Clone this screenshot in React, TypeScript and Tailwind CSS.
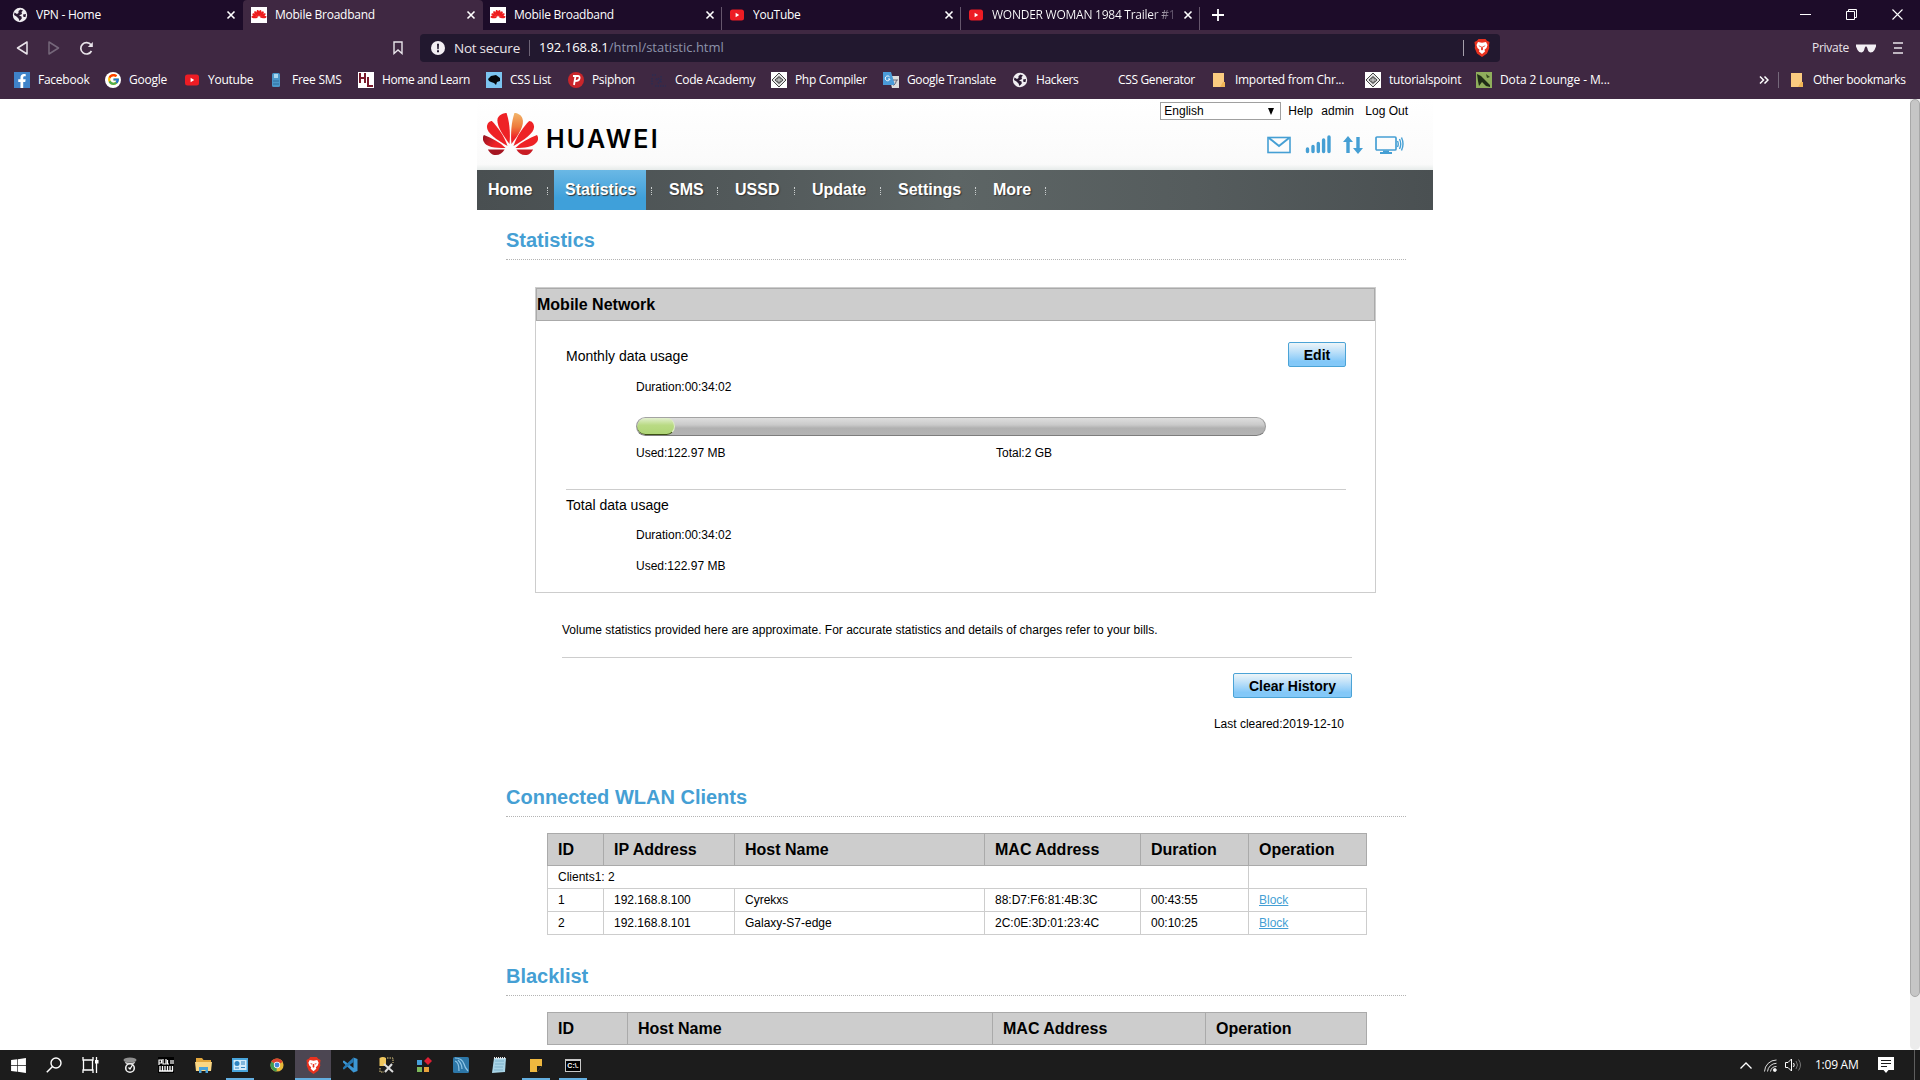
import type { ReactNode } from 'react';
import clsx from 'clsx';
import { FcGoogle } from 'react-icons/fc';
import { FaWindows, FaFacebookF } from 'react-icons/fa';

const PETAL = 'M0 -4 C-6 -13 -7 -25 -2 -30 C2 -31 5 -28 5 -23 C5 -16 2 -9 0 -4Z';

function HuaweiFlower({ className }: { className?: string }) {
    return (
        <svg viewBox="0 0 56 42" preserveAspectRatio="none" className={className}>
            <defs>
                <linearGradient id="petalGold" x1="0" y1="0" x2="0" y2="1">
                    <stop offset="0" stopColor="#f2b56a" />
                    <stop offset="0.45" stopColor="#ee7a3c" />
                    <stop offset="0.8" stopColor="#ee2226" />
                </linearGradient>
                <linearGradient id="petalDark" x1="0" y1="0" x2="1" y2="0.4">
                    <stop offset="0" stopColor="#8d1220" />
                    <stop offset="0.7" stopColor="#ee2226" />
                </linearGradient>
            </defs>
            <path d="M27 31 C20 22 13 12 15 5 C17 1 22 0 24 0 C27 9 28 20 27 31Z" fill="#ee2226" />
            <path d="M29 31 C28 20 29 9 32 0 C35 0 39 2 40 5 C43 12 36 22 29 31Z" fill="url(#petalGold)" />
            <path d="M25 33 C14 27 4 20 4 14 C4 10 7 8 9 8 C15 14 21 22 25 33Z" fill="#ee2226" />
            <path d="M31 33 C35 22 41 14 47 8 C50 8 52 11 52 14 C52 20 42 27 31 33Z" fill="#ee2226" />
            <path d="M23 35 C12 35 3 34 1 29 C-1 26 0 23 1 22 C9 25 17 29 23 35Z" fill="url(#petalDark)" />
            <path d="M33 35 C39 29 47 25 55 22 C57 25 56 28 54 30 C51 34 42 35 33 35Z" fill="#ee2226" />
            <path d="M5 36.500 L22 36.500 C20 40 17 42 13 42 C9 42 7 40 5 36.500Z" fill="#a51622" />
            <path d="M34 36.500 L51 36.500 C49 40 47 42 43 42 C39 42 36 40 34 36.500Z" fill="#c91c24" />
        </svg>
    );
}

function FlowerFavicon() {
    return (
        <span className="flex size-4 items-center justify-center bg-white">
            <svg viewBox="-32 -32 64 44" className="h-3 w-4">
                {[-84, -60, -36, -12, 12, 36, 60, 84].map(a => (
                    <path key={a} d={PETAL} fill="#ee1c1c" transform={`rotate(${a})`} />
                ))}
            </svg>
        </span>
    );
}

function Globe() {
    return (
        <svg viewBox="0 0 16 16" className="size-4">
            <circle cx="8" cy="8" r="7.200" fill="#f1eef2" />
            <path d="M8.500 2.500 L11 3.500 L9.500 5 L10 7 L7 8.500 L9.500 9.500 L9.800 11.500 L7.500 14 L6.500 11.500 L4.500 9.500 L2 8 L2.500 5.500 L5 7 L6.500 6 L6.500 4Z M11 7.500 L14 7 L13.500 10 L11.500 10Z" fill="#2b1a33" />
        </svg>
    );
}

function YoutubeIcon() {
    return (
        <svg viewBox="0 0 16 16" className="size-4">
            <rect x="1" y="2.500" width="14" height="11" rx="2.500" fill="#ed1c24" />
            <path d="M6.600 5.800 L10.200 8 L6.600 10.200Z" fill="#fff" />
        </svg>
    );
}

function Folder() {
    return (
        <svg viewBox="0 0 16 16" className="size-4">
            <path d="M2 1 H13 V11 H14 V15 H2Z" fill="#fbcb80" />
            <path d="M12 10 H14 V15 H9Z" fill="#f0b455" />
        </svg>
    );
}

function BraveLion({ className }: { className?: string }) {
    return (
        <svg viewBox="0 0 16 18" className={className}>
            <path d="M4.500 0 H11.500 L13 1.800 L15.500 3 L15 7 L15.300 9 L13 14.500 L8 18 L3 14.500 L0.700 9 L1 7 L0.500 3 L3 1.800Z" fill="#e8321f" />
            <path d="M4 3 L8 3.800 L12 3 L13.500 6 L12.500 9 L10.500 10.800 L11 12.500 L8 15 L5 12.500 L5.500 10.800 L3.500 9 L2.500 6Z" fill="#fff" />
            <path d="M4.300 6.300 L7 7.200 L6.300 8.200Z M11.700 6.300 L9 7.200 L9.700 8.200Z M7.300 7.500 H8.700 L9 10.500 L8 11.500 L7 10.500Z" fill="#e8321f" />
        </svg>
    );
}

function CompilerIcon() {
    return (
        <svg viewBox="0 0 16 16" className="size-4">
            <rect width="16" height="16" fill="#fff" />
            <path d="M8 1 L15 8 L8 15 L1 8Z" fill="#e4e4e4" stroke="#444" />
            <path d="M4 8 L8 4.500 L12 8 L8 11.500Z" fill="#777" stroke="#333" strokeWidth="0.800" />
            <path d="M5 8 H11 M8 6 V10" stroke="#ddd" strokeWidth="0.800" />
        </svg>
    );
}

interface Tab {
    title: string;
    icon: ReactNode;
    active?: boolean;
    divider?: boolean;
    faded?: boolean;
    className: string;
}

const tabs: Tab[] = [
    { title: 'VPN - Home', icon: <Globe />, className: 'w-[243px] pl-3' },
    { title: 'Mobile Broadband', icon: <FlowerFavicon />, active: true, className: 'w-[240px] pl-2' },
    { title: 'Mobile Broadband', icon: <FlowerFavicon />, divider: true, className: 'w-[239px] pl-[7px]' },
    { title: 'YouTube', icon: <YoutubeIcon />, divider: true, className: 'w-[239px] pl-[7px]' },
    { title: 'WONDER WOMAN 1984 Trailer #1', icon: <YoutubeIcon />, divider: true, faded: true, className: 'w-[239px] pl-[7px]' },
];

function TabStrip() {
    return (
        <div className="flex h-[30px] bg-[#1d0c29]">
            {tabs.map((tab, i) => (
                <div
                    key={i}
                    className={clsx(
                        'relative flex items-center pr-[7px]',
                        tab.className,
                        tab.active && 'rounded-t-[4px] bg-[#3f2842]'
                    )}
                >
                    {tab.icon}
                    <span
                        className={clsx(
                            'ml-2 flex-1 overflow-hidden whitespace-nowrap',
                            tab.faded && 'bg-linear-to-r from-white from-85% to-[#3a2a45] to-100% bg-clip-text text-transparent'
                        )}
                    >
                        {tab.title}
                    </span>
                    <svg viewBox="0 0 10 10" className="ml-1 size-[10px]">
                        <path d="M1.500 1.500 L8.500 8.500 M8.500 1.500 L1.500 8.500" stroke="#fff" strokeWidth="1.600" />
                    </svg>
                    {tab.divider && <span className="absolute right-0 bottom-0 h-[23px] w-px bg-[#65566c]" />}
                </div>
            ))}
            <svg viewBox="0 0 12 12" className="mt-[9px] ml-3 size-3">
                <path d="M6 0 V12 M0 6 H12" stroke="#fff" strokeWidth="1.800" />
            </svg>
            <div className="ml-auto flex gap-[35px] pt-[9px] pr-[17px]">
                <svg viewBox="0 0 11 11" className="size-[11px]"><path d="M0 5.500 H11" stroke="#fff" /></svg>
                <svg viewBox="0 0 11 11" className="size-[11px]">
                    <path d="M0.500 2.500 H8.500 V10.500 H0.500Z M2.500 2.500 V0.500 H10.500 V8.500 H8.500" fill="none" stroke="#fff" />
                </svg>
                <svg viewBox="0 0 11 11" className="size-[11px]"><path d="M0.500 0.500 L10.500 10.500 M10.500 0.500 L0.500 10.500" stroke="#fff" strokeWidth="1.100" /></svg>
            </div>
        </div>
    );
}

function AddressBar() {
    return (
        <div className="flex h-9 items-center pl-[16px] text-[#e9e4ea]">
            <svg viewBox="0 0 12 14" className="h-[14px] w-3"><path d="M11 1 V13 L1.500 7Z" fill="none" stroke="#e9e4ea" strokeWidth="1.500" strokeLinejoin="round" /></svg>
            <svg viewBox="0 0 12 14" className="ml-5 h-[14px] w-3"><path d="M1 1 V13 L10.500 7Z" fill="none" stroke="#75677a" strokeWidth="1.500" strokeLinejoin="round" /></svg>
            <svg viewBox="0 0 15 15" className="ml-[19px] size-[15px]">
                <path d="M12.500 10 A5.700 5.700 0 1 1 12 3.800" fill="none" stroke="#e9e4ea" strokeWidth="1.700" />
                <path d="M13.800 1 V6 H8.800Z" fill="#e9e4ea" />
            </svg>
            <svg viewBox="0 0 10 14" className="ml-[299px] h-[14px] w-[10px]"><path d="M1 1 H9 V12.500 L5 9 L1 12.500Z" fill="none" stroke="#e9e4ea" strokeWidth="1.400" /></svg>
            <div className="ml-[17px] flex h-[28px] w-[1080px] items-center rounded-[4px] bg-[#22182f] pl-[11px] text-[13.500px]">
                <svg viewBox="0 0 14 14" className="size-[14px]">
                    <circle cx="7" cy="7" r="7" fill="#f3eff4" />
                    <path d="M6 2.800 H8 L7.700 8.200 H6.300Z M6 9.300 H8 V11.200 H6Z" fill="#22182f" />
                </svg>
                <span className="ml-[9px] w-[75px] whitespace-nowrap">Not secure</span>
                <span className="h-4 w-px bg-[#6d6476]" />
                <span className="ml-[9px] text-[13px] tracking-normal whitespace-nowrap text-[#8d93ab]">
                    <span className="text-white">192.168.8.1</span>/html/statistic.html
                </span>
                <span className="ml-auto h-4 w-px bg-[#a59fab]" />
                <BraveLion className="mr-[10px] ml-[10px] h-[18px] w-4" />
            </div>
            <span className="ml-auto">Private</span>
            <svg viewBox="0 0 20 9" className="ml-[7px] h-[9px] w-[20px]">
                <path d="M0 0.500 H20 V2.500 L18.500 6 Q17 8.500 14.500 8.500 Q12 8 11.300 4 L10.500 2.500 H9.500 L8.700 4 Q8 8 5.500 8.500 Q3 8.500 1.500 6 L0 2.500Z" fill="#f3eff4" />
            </svg>
            <svg viewBox="0 0 10 12" className="mr-[17px] ml-[17px] h-3 w-[10px]"><path d="M0 1 H10 M1 6 H9 M0 11 H10" stroke="#e9e4ea" strokeWidth="1.700" /></svg>
        </div>
    );
}

const bookmarks: { label: string; icon: ReactNode; className: string }[] = [
    {
        label: 'Facebook',
        className: 'w-[91px]',
        icon: <span className="flex size-4 items-end justify-center bg-[#3f83c9] text-[14px] text-white"><FaFacebookF /></span>,
    },
    {
        label: 'Google',
        className: 'w-[79px]',
        icon: <span className="flex size-4 items-center justify-center rounded-full bg-white text-[13px]"><FcGoogle /></span>,
    },
    { label: 'Youtube', className: 'w-[84px]', icon: <YoutubeIcon /> },
    {
        label: 'Free SMS',
        className: 'w-[90px]',
        icon: (
            <svg viewBox="0 0 16 16" className="size-4">
                <rect x="4" y="1" width="8" height="14" rx="1.500" fill="#4b97c9" />
                <rect x="6" y="2" width="4" height="4" fill="#a9d6ee" />
                <path d="M5 9 H11 M5 12 H11" stroke="#2f6d9c" />
            </svg>
        ),
    },
    {
        label: 'Home and Learn',
        className: 'w-[128px] tracking-[-0.400px]',
        icon: (
            <svg viewBox="0 0 16 16" className="size-4">
                <rect width="16" height="16" fill="#fff" />
                <path d="M2 1 V11 M7 1 V11 M2 6 H7 M10 5 V14 H15" fill="none" stroke="#7a1a2c" strokeWidth="2" />
            </svg>
        ),
    },
    {
        label: 'CSS List',
        className: 'w-[82px]',
        icon: (
            <svg viewBox="0 0 16 16" className="size-4">
                <rect width="16" height="16" fill="#7cc4f0" />
                <path d="M2 7 L5 4 L10 3 L14 6 L14 9 L11 10 L10 13 L8 11 L5 10 L3 9Z" fill="#05070a" />
            </svg>
        ),
    },
    {
        label: 'Psiphon',
        className: 'w-[83px] tracking-[-0.350px]',
        icon: (
            <svg viewBox="0 0 16 16" className="size-4">
                <circle cx="8" cy="8" r="8" fill="#c9262b" />
                <path d="M6 13 L7.500 4 H10 Q12 4 11.500 6.500 Q11 9 7 9 M5 4 H8" fill="none" stroke="#fff" strokeWidth="1.800" />
            </svg>
        ),
    },
    {
        label: 'Code Academy',
        className: 'w-[120px]',
        icon: (
            <svg viewBox="0 0 16 16" className="size-4">
                <path d="M1 3 H5 M1 6 V13 M4 14 H15 M10 4 V11 M5 8 Q7 5 9 8 Q9 11 6 11" fill="none" stroke="#2d2b51" strokeWidth="1.500" strokeDasharray="1.500 1" />
            </svg>
        ),
    },
    { label: 'Php Compiler', className: 'w-[112px] tracking-[-0.350px]', icon: <CompilerIcon /> },
    {
        label: 'Google Translate',
        className: 'w-[129px] tracking-[-0.350px]',
        icon: (
            <svg viewBox="0 0 16 16" className="size-4">
                <path d="M6 4 H16 V16 H9Z" fill="#dcdcdc" />
                <path d="M0 0 H8 L12 13 H0Z" fill="#4a9bd8" />
                <path d="M6.500 4.800 A2.400 2.400 0 1 0 7 7 H5" fill="none" stroke="#fff" />
                <path d="M10 8 H15 M13.500 8 Q13 12 10.500 13.500" fill="none" stroke="#667" />
            </svg>
        ),
    },
    { label: 'Hackers', className: 'w-[82px] tracking-[-0.350px]', icon: <Globe /> },
    { label: 'CSS Generator', className: 'w-[117px] tracking-[-0.350px]', icon: <span className="size-4" /> },
    { label: 'Imported from Chr...', className: 'w-[154px] tracking-[-0.300px]', icon: <Folder /> },
    { label: 'tutorialspoint', className: 'w-[111px]', icon: <CompilerIcon /> },
    {
        label: 'Dota 2 Lounge - M...',
        className: 'w-[140px] tracking-[-0.100px]',
        icon: (
            <svg viewBox="0 0 16 16" className="size-4">
                <rect width="16" height="16" fill="#8fae5c" />
                <path d="M1 2 L5 4 L14 13 L14 15 L10 14 L6 10 L3 14 L2 9Z" fill="#1f2d16" />
                <path d="M10 2 L14 5 L11 6Z" fill="#36491f" />
            </svg>
        ),
    },
];

function BookmarksBar() {
    return (
        <div className="flex h-8 items-center pb-[5px] pl-[14px] whitespace-nowrap">
            {bookmarks.map(b => (
                <div key={b.label} className={clsx('flex shrink-0 items-center gap-2', b.className)}>
                    {b.icon}
                    {b.label}
                </div>
            ))}
            <svg viewBox="0 0 10 8" className="ml-auto h-2 w-[10px]"><path d="M1 0.500 L4.500 4 L1 7.500 M5.500 0.500 L9 4 L5.500 7.500" fill="none" stroke="#fff" strokeWidth="1.500" /></svg>
            <span className="ml-[9px] h-4 w-px bg-[#75687a]" />
            <div className="ml-[10px] flex w-[131px] items-center gap-2 tracking-[-0.400px]">
                <Folder />
                Other bookmarks
            </div>
        </div>
    );
}

const navItems = [
    { label: 'Home', className: 'w-[77px] pl-[11px]' },
    { label: 'Statistics', className: 'w-[92px] pl-[11px]', active: true },
    { label: 'SMS', className: 'w-[66px] pl-[17px]' },
    { label: 'USSD', className: 'w-[77px] pl-[17px]' },
    { label: 'Update', className: 'w-[86px] pl-[17px]' },
    { label: 'Settings', className: 'w-[95px] pl-[17px]' },
    { label: 'More', className: 'w-[70px] pl-[17px]' },
];

function NavDots({ className }: { className?: string }) {
    return <span className={clsx('mt-px h-2 border-l border-dotted border-[#c9cdcd]', className)} />;
}

function StatusIcons() {
    return (
        <div className="flex h-[19px] items-center text-[#459fd4]">
            <svg viewBox="0 0 24 18" className="h-[18px] w-6" fill="none" stroke="currentColor">
                <rect x="1" y="1.500" width="22" height="15" strokeWidth="1.600" />
                <path d="M2 2 L12 10 L22 2" strokeWidth="2" />
            </svg>
            <svg viewBox="0 0 26 19" className="ml-[14px] h-[19px] w-[26px]" stroke="currentColor" strokeWidth="3.400" strokeLinecap="round">
                <path d="M2.500 14 V16.500 M8 11.500 V16.500 M13.300 8.500 V16.500 M18.600 5 V16.500 M24 2 V16.500" />
            </svg>
            <svg viewBox="0 0 20 18" className="ml-[12px] h-[18px] w-5" fill="currentColor">
                <path d="M5 0 L10 6 H6.700 V17 H3.300 V6 H0Z" />
                <path d="M15 18 L20 12 H16.700 V1 H13.300 V12 H10Z" />
            </svg>
            <svg viewBox="0 0 29 18" className="ml-3 h-[18px] w-[29px]" fill="none" stroke="currentColor">
                <rect x="1" y="1" width="20" height="13" rx="1" strokeWidth="1.700" />
                <path d="M5 17 H17 M8 15.500 H14" strokeWidth="2" />
                <path d="M22.500 5 Q24 8 22.500 11 M24.500 3 Q27 8 24.500 13 M26.500 1.500 Q29.500 8 26.500 14.500" strokeWidth="1.400" />
            </svg>
        </div>
    );
}

function Header() {
    return (
        <header className="flex h-[71px] justify-between bg-[linear-gradient(#fff,#fbfbfb_80%,#fafafa_92%,#e6ebea)]">
            <div className="flex items-start pt-[14px] pl-[6px]">
                <HuaweiFlower className="h-[42px] w-[55px]" />
                <span className="mt-[13px] ml-[8px] font-['Inter'] text-[25px] leading-[26px] font-semibold tracking-[2.200px] text-black">HUAWEI</span>
            </div>
            <div className="flex flex-col items-end pt-[3px] pr-[25px]">
                <div className="flex h-[18px] items-center">
                    <div className="flex h-[18px] w-[121px] items-center justify-between border border-[#a0a0a0] bg-white pr-[6px] pl-[3px]">
                        English
                        <svg viewBox="0 0 6 7" className="h-[7px] w-[6px]"><path d="M0 0 H6 L3 7Z" /></svg>
                    </div>
                    <span className="ml-[7px] w-[33px]">Help</span>
                    <span className="w-[44px]">admin</span>
                    <span className="whitespace-nowrap">Log Out</span>
                </div>
                <div className="mt-[15px] mr-1">
                    <StatusIcons />
                </div>
            </div>
        </header>
    );
}

function NavBar() {
    return (
        <nav className="flex h-10 bg-[linear-gradient(90deg,#494f51,#535a5b_30%,#5d6565_50%,#555c5d_75%,#4a5052)] text-base font-bold text-white">
            {navItems.map(item => (
                <div key={item.label} className="flex items-center">
                    <div
                        className={clsx(
                            'flex h-full items-center justify-between',
                            item.className,
                            item.active && 'bg-linear-to-b from-[#6ab8e5] to-[#3fa0da] to-70%'
                        )}
                    >
                        <span className="[text-shadow:1px_1px_1px_#333]">{item.label}</span>
                        {!item.active && <NavDots className={item.label === 'Home' ? 'mr-[6px]' : undefined} />}
                    </div>
                    {item.active && <NavDots className="ml-[5px]" />}
                </div>
            ))}
        </nav>
    );
}

function SectionTitle({ children, className }: { children: ReactNode; className?: string }) {
    return (
        <h2 className={clsx('ml-[29px] h-[50px] w-[900px] border-b border-dotted border-[#b4b4b4] pt-[15px] text-xl leading-[30px] font-bold text-[#459fd4]', className)}>
            {children}
        </h2>
    );
}

function BlueButton({ children, className }: { children: ReactNode; className?: string }) {
    return (
        <button className={clsx('h-[25px] rounded-[2px] border border-[#4ba3d6] bg-linear-to-b from-[#eef5f8] to-[#83c8f8] to-80% text-sm leading-none font-bold text-black', className)}>
            {children}
        </button>
    );
}

function UsageBar({ used, total }: { used: number; total: number }) {
    return (
        <div className="ml-[70px] h-[19px] w-[630px] overflow-hidden rounded-full border border-t-[#a3a3a3] border-r-[#999] border-b-[#7d7d7d] border-l-[#999] bg-[linear-gradient(#dedede,#cacaca_40%,#b0b0b0_60%,#b4b4b4)]">
            <div
                className="h-full rounded-full border-r border-b border-r-[#dff0c4] border-b-[#3c5014] bg-[linear-gradient(#e2efce,#b9da84_45%,#afd576)]"
                style={{ width: `${(used / total) * 100}%` }}
            />
        </div>
    );
}

function UsagePanel() {
    return (
        <section className="mt-[27px] ml-[58px] h-[306px] w-[841px] border border-[#cdcdcd] bg-white">
            <h3 className="flex h-[33px] items-center border border-[#aaa] bg-[#cdcdcd] text-base font-bold">Mobile Network</h3>
            <div className="pt-[21px] pr-[29px] pl-[30px] leading-5">
                <div className="flex h-[25px] items-start justify-between">
                    <span className="mt-1 text-sm leading-5">Monthly data usage</span>
                    <BlueButton className="w-[58px]">Edit</BlueButton>
                </div>
                <p className="mt-[10px] mb-5 ml-[70px]">Duration:00:34:02</p>
                <UsageBar used={122.97} total={2048} />
                <div className="mt-[7px] ml-[70px] flex">
                    <span className="w-[360px]">Used:122.97 MB</span>
                    <span>Total:2 GB</span>
                </div>
                <div className="mt-[26px] border-t border-[#cdcdcd] pt-[5px]">
                    <p className="text-sm leading-5">Total data usage</p>
                    <p className="mt-[10px] ml-[70px]">Duration:00:34:02</p>
                    <p className="mt-[11px] ml-[70px]">Used:122.97 MB</p>
                </div>
            </div>
        </section>
    );
}

const clients = [
    { id: 1, ip: '192.168.8.100', host: 'Cyrekxs', mac: '88:D7:F6:81:4B:3C', duration: '00:43:55' },
    { id: 2, ip: '192.168.8.101', host: 'Galaxy-S7-edge', mac: '2C:0E:3D:01:23:4C', duration: '00:10:25' },
];

const th = 'border border-[#aaa] pl-[10px] text-left text-base leading-5 font-bold';
const td = 'border border-[#cdcdcd] pl-[10px] leading-4';

function ClientsTable() {
    return (
        <table className="mt-4 ml-[70px] w-[820px] table-fixed border-collapse">
            <thead>
                <tr className="h-8 bg-[#cdcdcd]">
                    <th className={clsx(th, 'w-[56px]')}>ID</th>
                    <th className={clsx(th, 'w-[131px]')}>IP Address</th>
                    <th className={clsx(th, 'w-[250px]')}>Host Name</th>
                    <th className={clsx(th, 'w-[156px]')}>MAC Address</th>
                    <th className={clsx(th, 'w-[108px]')}>Duration</th>
                    <th className={th}>Operation</th>
                </tr>
            </thead>
            <tbody>
                <tr className="h-[23px]">
                    <td className={td} colSpan={5}>Clients1: 2</td>
                    <td className="border-b border-[#cdcdcd]" />
                </tr>
                {clients.map(c => (
                    <tr key={c.id} className="h-[23px]">
                        <td className={td}>{c.id}</td>
                        <td className={td}>{c.ip}</td>
                        <td className={td}>{c.host}</td>
                        <td className={td}>{c.mac}</td>
                        <td className={td}>{c.duration}</td>
                        <td className={td}><a className="text-[#459fd4] underline">Block</a></td>
                    </tr>
                ))}
            </tbody>
        </table>
    );
}

function BlacklistTable() {
    return (
        <table className="mt-4 ml-[70px] w-[820px] table-fixed border-collapse">
            <thead>
                <tr className="h-8 bg-[#cdcdcd]">
                    <th className={clsx(th, 'w-[80px]')}>ID</th>
                    <th className={clsx(th, 'w-[365px]')}>Host Name</th>
                    <th className={clsx(th, 'w-[213px]')}>MAC Address</th>
                    <th className={th}>Operation</th>
                </tr>
            </thead>
        </table>
    );
}

const taskIcons: { name: string; className: string; open?: boolean; active?: boolean; icon: ReactNode }[] = [
    { name: 'start', className: 'w-9', icon: <FaWindows className="size-[17px] text-white" /> },
    {
        name: 'search',
        className: 'w-9',
        icon: <svg viewBox="0 0 16 16" className="size-4"><circle cx="10" cy="6" r="5" fill="none" stroke="#fff" strokeWidth="1.400" /><path d="M6.500 9.500 L0.800 15.300" stroke="#fff" strokeWidth="1.500" /></svg>,
    },
    {
        name: 'task-view',
        className: 'w-9',
        icon: <svg viewBox="0 0 17 16" className="h-4 w-[17px]"><path d="M1 0 V3 H11 V0 M1 16 V13 H11 V16 M1.500 3 V13 M10.500 3 V13 M14.500 0 V16" fill="none" stroke="#fff" strokeWidth="1.300" /><rect x="13" y="3" width="3.500" height="3.500" fill="#fff" /></svg>,
    },
    {
        name: 'coffee',
        className: 'w-[44px]',
        icon: <svg viewBox="0 0 14 17" className="h-[17px] w-[14px]"><ellipse cx="7" cy="3" rx="6.500" ry="2.500" fill="#8f8f8f" /><path d="M1.500 4.500 Q7 7 12.500 4.500 L11 7 H3Z" fill="#c4c4c4" /><circle cx="7" cy="11" r="4.300" fill="#1c1c1c" stroke="#eee" strokeWidth="1.600" /><path d="M5.500 10.500 L7 12 L9.500 8" fill="none" stroke="#fff" strokeWidth="1.300" /></svg>,
    },
    {
        name: 'pubg',
        className: 'w-7',
        icon: <svg viewBox="0 0 16 16" className="size-4"><rect width="16" height="16" fill="#000" /><path d="M1 8 V3 H3.500 V6 H1 M5 2 V7 H8 V2 M9.500 3 V7 H11 M13 3 V7 M15 3 V7" fill="none" stroke="#fff" strokeWidth="1.200" /><path d="M2 9 V14 M4.500 9 V14 M7 9 V14 M9.500 9 V14 M12 9 V14 M14.500 9 V14 M1 14 H15" stroke="#fff" strokeWidth="1.300" /></svg>,
    },
    {
        name: 'explorer',
        className: 'w-[46px]',
        icon: <svg viewBox="0 0 17 15" className="h-[15px] w-[17px]"><path d="M1 0 H7 L8.500 2 H16 V13 H1Z" fill="#e2a63c" /><path d="M0 4 H17 L16 13 H1Z" fill="#fbd784" /><path d="M4 15 V9 H13 V15 H10.500 V12 H6.500 V15Z" fill="#4aa3da" /></svg>,
    },
    {
        name: 'control-panel',
        className: 'w-7',
        open: true,
        icon: <svg viewBox="0 0 16 14" className="h-[14px] w-4"><rect width="16" height="14" fill="#48a5dc" /><rect x="1.500" y="2" width="13" height="10" fill="#d4ecfa" /><circle cx="5" cy="5.500" r="2.500" fill="#2f84c0" /><path d="M9 4 H13 M9 6 H13 M3 10 H7 M9 9.500 H13" stroke="#2f84c0" /></svg>,
    },
    {
        name: 'chrome',
        className: 'w-[42px] pl-[3px]',
        icon: <svg viewBox="0 0 16 16" className="size-[14px]"><circle cx="8" cy="8" r="7.500" fill="#e8b93a" /><path d="M8 8 L1.500 4.300 A7.500 7.500 0 0 1 14.600 4.500Z" fill="#d8432f" /><path d="M8 8 L1.500 4.300 A7.500 7.500 0 0 0 7.500 15.500Z" fill="#3f9a52" /><circle cx="8" cy="8" r="3.600" fill="#fff" /><circle cx="8" cy="8" r="2.800" fill="#4285d8" /></svg>,
    },
    { name: 'brave', className: 'w-9 -ml-px', open: true, active: true, icon: <BraveLion className="h-[17px] w-[15px]" /> },
    {
        name: 'vscode',
        className: 'w-[37px]',
        icon: <svg viewBox="0 0 16 16" className="size-4"><path d="M11.500 0.500 L15.500 2 V14 L11.500 15.500 L1 5.500 V4 L2 3.500 L11.500 11Z" fill="#3c97d4" /><path d="M11.500 5 V0.500 L5 6.500 L1 10.500 V12 L2 12.500Z" fill="#2679b4" /></svg>,
    },
    {
        name: 'ssms',
        className: 'w-[38px]',
        icon: <svg viewBox="0 0 16 16" className="size-4"><path d="M0.500 1 Q4 -1 7 1 V9 H0.500Z" fill="#f0c75e" /><path d="M8 1 H14 V6 M1 11 V15 H5" fill="none" stroke="#e0cb84" strokeDasharray="1.500 1" /><path d="M5 7 L14 15 M13 7 L6 15" stroke="#ddd" strokeWidth="2" /></svg>,
    },
    {
        name: 'blocks',
        className: 'w-9',
        icon: <svg viewBox="0 0 16 16" className="size-4"><rect x="1" y="3" width="5" height="5" fill="#47a0db" /><rect x="1" y="10" width="5" height="5" fill="#7cb85a" /><rect x="8" y="10" width="5" height="5" fill="#e9a23b" /><path d="M12 0 L16 4 L12 8 L8 4Z" fill="#dd1f34" /></svg>,
    },
    {
        name: 'workbench',
        className: 'w-[38px]',
        icon: <svg viewBox="0 0 16 16" className="size-4"><rect width="16" height="16" rx="1.500" fill="#2d77a8" /><path d="M2 1 Q9 1 11 7 Q12 11 15 14 M2 4 Q6 5 6 14 M5 3 Q9 7 9 12" fill="none" stroke="#8fc5e6" strokeWidth="1.200" /></svg>,
    },
    {
        name: 'notepad',
        className: 'w-[38px]',
        icon: <svg viewBox="0 0 16 17" className="h-[17px] w-4"><path d="M3 1 H15 L14 15 L1 16Z" fill="#a9d4e6" /><path d="M4 4 H13 M4 7 H13 M3.500 10 H12 M3 13 H12" stroke="#7fb2cb" /><path d="M3 1 H15" stroke="#e8e8e8" strokeWidth="2" strokeDasharray="1 1" /></svg>,
    },
    {
        name: 'sticky-notes',
        className: 'ml-1 w-[28px]',
        open: true,
        icon: <svg viewBox="0 0 12 13" className="h-[13px] w-3"><path d="M0 0 H12 V7 L7 13 H0Z" fill="#efb83f" /><path d="M12 7 H7 V13Z" fill="#1c1c1c" /></svg>,
    },
    {
        name: 'cmd',
        className: 'ml-[9px] w-[28px]',
        open: true,
        icon: (
            <span className="flex h-[13px] w-4 items-center justify-center border border-t-2 border-[#c8c8c8] bg-black font-['Liberation_Sans'] text-[7px] leading-none font-bold">
                C:\.
            </span>
        ),
    },
];

function Taskbar() {
    return (
        <footer className="flex h-[30px] bg-[#1c1c1c] text-white">
            {taskIcons.map(t => (
                <div
                    key={t.name}
                    className={clsx(
                        'flex items-center justify-center',
                        t.className,
                        t.active && 'bg-[#4c4652]',
                        t.open && 'border-b-2 border-[#64afe0] pt-[2px]'
                    )}
                >
                    {t.icon}
                </div>
            ))}
            <div className="ml-auto flex items-center">
                <svg viewBox="0 0 12 7" className="h-[7px] w-3"><path d="M0.500 6.500 L6 1 L11.500 6.500" fill="none" stroke="#fff" strokeWidth="1.300" /></svg>
                <svg viewBox="0 0 13 13" className="ml-[12px] size-[13px]" fill="none" stroke="#ddd">
                    <path d="M0.500 12.500 A12 12 0 0 1 12.500 1 M3.500 12.500 A9 9 0 0 1 12.500 4.300 M6.500 12.500 A6 6 0 0 1 12.500 7.500" />
                    <circle cx="10.800" cy="11" r="1.500" fill="#fff" />
                </svg>
                <svg viewBox="0 0 17 14" className="ml-2 h-[14px] w-[17px]" fill="none" stroke="#fff">
                    <path d="M0.500 4.500 H3 L6.500 1 V13 L3 9.500 H0.500Z" />
                    <path d="M8.500 5 Q10 7 8.500 9" />
                    <path d="M11 3 Q14 7 11 11 M13.500 1.500 Q17.500 7 13.500 12.500" stroke="#777" />
                </svg>
                <span className="ml-[13px] w-[63px] tracking-[-0.250px] whitespace-nowrap">1:09 AM</span>
                <svg viewBox="0 0 16 16" className="size-4">
                    <path d="M0 0 H16 V13 H10.500 L8 16 L5.500 13 H0Z" fill="#fff" />
                    <path d="M3 3.500 H13 M3 6.500 H13 M3 9.500 H9" stroke="#1c1c1c" />
                </svg>
                <span className="mr-[5px] ml-5 h-full w-px bg-[#5e5e5e]" />
            </div>
        </footer>
    );
}

export default function App() {
    return (
        <div className="h-[1080px] w-[1920px] overflow-hidden bg-white font-['Open_Sans',sans-serif] text-[12px]">
            <div className="h-[99px] bg-[#3f2842] tracking-[-0.250px] text-white">
                <TabStrip />
                <AddressBar />
                <BookmarksBar />
            </div>

            <div className="flex h-[951px] overflow-hidden font-['Liberation_Sans',sans-serif] text-black">
                <main className="ml-[477px] w-[956px]">
                    <Header />
                    <NavBar />
                    <SectionTitle>Statistics</SectionTitle>
                    <UsagePanel />
                    <div className="mt-[27px] ml-[85px] w-[790px] leading-5">
                        <p className="border-b border-[#cdcdcd] pb-[17px]">
                            Volume statistics provided here are approximate. For accurate statistics and details of charges refer to your bills.
                        </p>
                        <div className="mt-[15px] flex flex-col items-end">
                            <BlueButton className="w-[119px]">Clear History</BlueButton>
                            <p className="mt-4 mr-2">Last cleared:2019-12-10</p>
                        </div>
                    </div>
                    <SectionTitle className="mt-[33px]">Connected WLAN Clients</SectionTitle>
                    <ClientsTable />
                    <SectionTitle className="mt-[11px]">Blacklist</SectionTitle>
                    <BlacklistTable />
                </main>
                <div className="ml-auto w-[10px] rounded-b-full bg-[#ececec]">
                    <div className="h-[898px] rounded-full border border-[#a8a8a8] bg-[#c6c6c6]" />
                </div>
            </div>

            <Taskbar />
        </div>
    );
}
